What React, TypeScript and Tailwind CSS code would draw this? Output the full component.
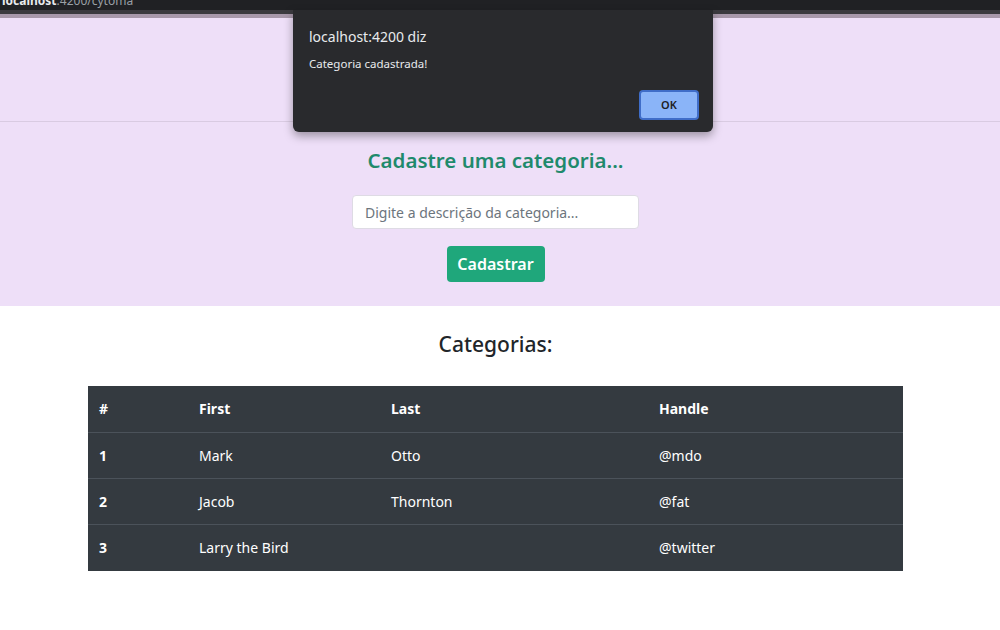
const rows = [
  { id: '1', first: 'Mark', last: 'Otto', handle: '@mdo' },
  { id: '2', first: 'Jacob', last: 'Thornton', handle: '@fat' },
  { id: '3', first: 'Larry the Bird', last: '', handle: '@twitter' },
]

function AlertDialog() {
  return (
    <div className="absolute left-[293px] top-[10px] w-[420px] h-[122px] bg-[#292a2d] rounded-b-[6px] shadow-[0_4px_10px_rgba(0,0,0,0.35)] px-[16px] pt-[18px]">
      <p className="text-[14px] leading-[18px] text-[#e8eaed]">localhost:4200 diz</p>
      <p className="mt-[11px] text-[11.5px] leading-[14px] text-[#e8eaed]">Categoria cadastrada!</p>
      <div className="flex justify-end mt-[19px]">
        <button className="w-[60px] h-[30px] mr-[-2px] rounded-[4px] bg-[#8ab4f8] border-2 border-[#3f6dc8] text-[11px] font-semibold text-[#202124]">
          OK
        </button>
      </div>
    </div>
  )
}

export default function App() {
  return (
    <div className="relative w-[1000px] h-[630px] overflow-hidden bg-white font-['Noto_Sans',sans-serif] text-[#212529]">
      {/* browser chrome peeking in at the top */}
      <div className="h-[10px] bg-[#202124] overflow-hidden pl-[2px]">
        <p className="mt-[-7px] text-[12px] leading-[16px] text-[#9aa0a6]">
          <span className="font-bold text-[#e8eaed]">localhost</span>:4200/cytoma
        </p>
      </div>
      <div className="h-[4px] bg-[#3b3a3f]" />
      <div className="h-[4px] bg-[#a898ab]" />

      <div className="w-[991px]">
        <section className="bg-[#eedff8] w-[1000px]">
          <div className="h-[104px] border-b border-[#d9cbe2]" />
          <div className="w-[991px] flex flex-col items-center pt-[22px] pb-[24px]">
            <h2 className="text-[20.5px] leading-[32px] font-semibold text-[#1f8a6c]">Cadastre uma categoria...</h2>
            <input
              className="mt-[19px] w-[287px] h-[34px] rounded-[4px] border border-[#dedbe4] bg-white px-[12px] text-[14px] placeholder:text-[#6c757d] outline-none"
              placeholder="Digite a descrição da categoria..."
            />
            <button className="mt-[17px] w-[98px] h-[36px] rounded-[4px] bg-[#1fa77b] text-white text-[16px] font-semibold">
              Cadastrar
            </button>
          </div>
        </section>

        <h3 className="mt-[23px] text-center text-[21px] leading-[30px] font-medium">Categorias:</h3>

        <table className="mt-[27px] ml-[88px] w-[815px] bg-[#343a40] text-white text-[14px] border-collapse">
          <thead>
            <tr className="h-[46px] text-left">
              <th className="pl-[11px] w-[111px] font-bold">#</th>
              <th className="w-[192px] font-bold">First</th>
              <th className="w-[268px] font-bold">Last</th>
              <th className="font-bold">Handle</th>
            </tr>
          </thead>
          <tbody>
            {rows.map((r) => (
              <tr key={r.id} className="h-[46.3px] border-t border-[#4b525a]">
                <th className="pl-[11px] text-left font-bold">{r.id}</th>
                <td>{r.first}</td>
                <td>{r.last}</td>
                <td>{r.handle}</td>
              </tr>
            ))}
          </tbody>
        </table>
      </div>

      <AlertDialog />
    </div>
  )
}
